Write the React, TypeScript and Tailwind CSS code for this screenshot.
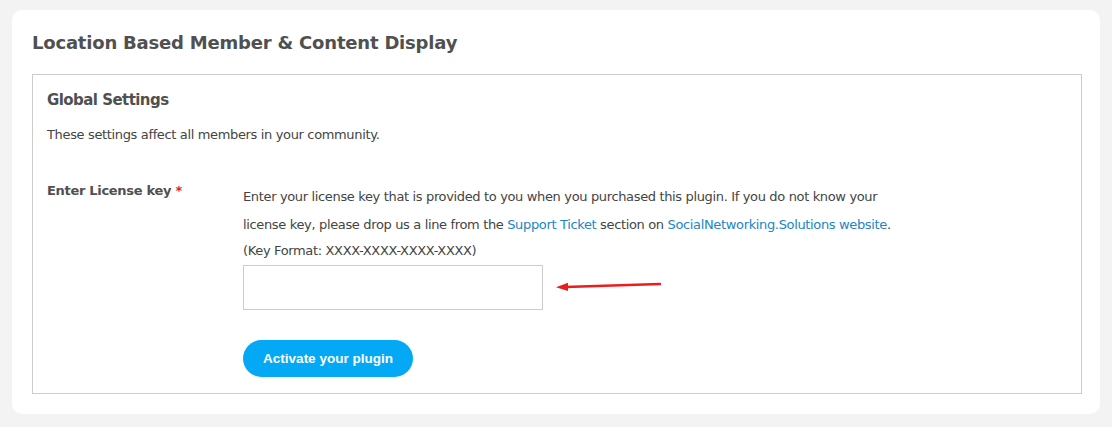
export default function App() {
  return (
    <div className="min-h-[427px] bg-[#f3f3f3] px-3 pt-[10px] pb-[14px] font-['DejaVu_Sans',sans-serif] text-[#444]">
      <div className="rounded-[10px] bg-white pl-5 pr-[18px] pt-[21px] pb-5">
        <h1 className="text-[18px] font-bold leading-[24px] tracking-[-0.2px] text-[#505050]">
          Location Based Member &amp; Content Display
        </h1>

        <div className="mt-[19px] border border-[#cccccc] px-[14px] pt-[15px] pb-[16px]">
          <h2 className="text-[15px] font-bold leading-[20px] tracking-[-0.55px] text-[#505050]">Global Settings</h2>
          <p className="mt-[15px] text-[13px] leading-[19px] tracking-[-0.35px]">
            These settings affect all members in your community.
          </p>

          <div className="mt-[37px] flex">
            <div className="w-[196px] shrink-0 pt-[2px] text-[13px] font-bold leading-[16px] tracking-[-0.3px] text-[#505050]">
              Enter License key <span className="text-[#e02020]">*</span>
            </div>
            <div className="pt-[2px] text-[13px] leading-[28px] tracking-[-0.35px]">
              <p>
                Enter your license key that is provided to you when you purchased this plugin. If you do not know your
                <br />
                license key, please drop us a line from the{" "}
                <a className="text-[#2185c5]">Support Ticket</a> section on{" "}
                <a className="text-[#2185c5]">SocialNetworking.Solutions website</a>.
              </p>
              <p className="leading-[24px]">(Key Format: XXXX-XXXX-XXXX-XXXX)</p>
              <div className="mt-[2px] flex items-center">
                <input className="h-[45px] w-[300px] border border-[#cccccc] bg-white outline-none" />
                <svg width="110" height="12" viewBox="0 0 110 12" className="ml-[12px] mb-[4px]">
                  <line x1="10" y1="7" x2="105" y2="4" stroke="#ee1c1c" strokeWidth="2.4" strokeLinecap="round" />
                  <polygon points="1,7.3 13,2.8 13,11" fill="#ee1c1c" />
                </svg>
              </div>
              <button className="mt-[30px] h-[37px] w-[170px] rounded-full bg-[#03a9f4] text-[13.5px] font-bold tracking-normal text-white font-['Liberation_Sans',sans-serif]">
                Activate your plugin
              </button>
            </div>
          </div>
        </div>
      </div>
    </div>
  );
}
